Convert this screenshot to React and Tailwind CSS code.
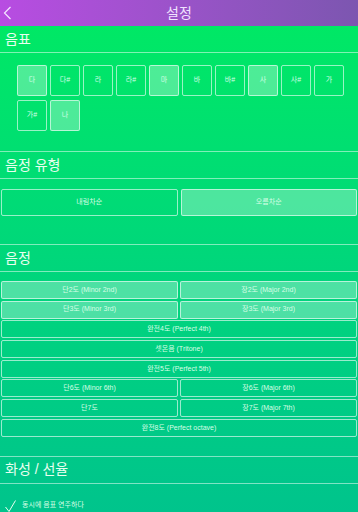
import React from "react";

const notes = [
  { name: "다", on: true },
  { name: "다#", on: false },
  { name: "라", on: false },
  { name: "라#", on: false },
  { name: "마", on: true },
  { name: "바", on: false },
  { name: "바#", on: false },
  { name: "사", on: true },
  { name: "사#", on: false },
  { name: "가", on: false },
  { name: "가#", on: false },
  { name: "나", on: true },
];

const intervals = [
  [
    { name: "단2도 (Minor 2nd)", on: true },
    { name: "장2도 (Major 2nd)", on: true },
  ],
  [
    { name: "단3도 (Minor 3rd)", on: true },
    { name: "장3도 (Major 3rd)", on: true },
  ],
  [{ name: "완전4도 (Perfect 4th)", on: false }],
  [{ name: "셋온음 (Tritone)", on: false }],
  [{ name: "완전5도 (Perfect 5th)", on: false }],
  [
    { name: "단6도 (Minor 6th)", on: false },
    { name: "장6도 (Major 6th)", on: false },
  ],
  [
    { name: "단7도", on: false },
    { name: "장7도 (Major 7th)", on: false },
  ],
  [{ name: "완전8도 (Perfect octave)", on: false }],
];

const font = {
  fontFamily: '"Liberation Sans", "Noto Sans CJK KR", sans-serif',
};

const SectionTitle = ({ children }) => (
  <div className="h-[27px] shrink-0 flex items-center px-[5px] border-b border-white/50 text-[14px] text-[#e9fff0]">
    {children}
  </div>
);

const App = () => {
  return (
    <div
      className="w-[358px] h-[512px] overflow-hidden flex flex-col bg-gradient-to-b from-[#00ea62] to-[#00c48c]"
      style={font}
    >
      {/* Header */}
      <div className="h-[26px] shrink-0 relative flex items-center justify-center bg-gradient-to-r from-[#b84ce2] to-[#7c56b0]">
        <svg
          className="absolute left-[3px] top-[6px]"
          width="9"
          height="14"
          viewBox="0 0 9 14"
          fill="none"
          stroke="#f3e6ff"
          strokeWidth="1.2"
        >
          <path d="M7.5 1 L1.5 7 L7.5 13" />
        </svg>
        <span className="text-[14px] text-[#f0e2ff]">설정</span>
      </div>

      {/* 음표 */}
      <SectionTitle>음표</SectionTitle>
      <div className="shrink-0 pt-[12px] pb-[20px] pl-[17px] border-b border-white/50">
        <div className="flex flex-wrap gap-x-[3px] gap-y-[4px] w-[330px]">
          {notes.map((n, i) => (
            <div
              key={i}
              className={`w-[30px] h-[31px] rounded-[2px] border border-white/60 flex items-center justify-center text-[7px] text-[#d8ffe6] ${
                n.on ? "bg-white/30" : ""
              }`}
            >
              {n.name}
            </div>
          ))}
        </div>
      </div>

      {/* 음정 유형 */}
      <SectionTitle>음정 유형</SectionTitle>
      <div className="shrink-0 pt-[10px] pb-[28px] px-[1px] flex gap-[3px] border-b border-white/50">
        <div className="flex-1 h-[27px] rounded-[2px] border border-white/60 flex items-center justify-center text-[7px] text-[#d8ffe6]">
          내림차순
        </div>
        <div className="flex-1 h-[27px] rounded-[2px] border border-white/60 bg-white/30 flex items-center justify-center text-[7px] text-[#d8ffe6]">
          오름차순
        </div>
      </div>

      {/* 음정 */}
      <SectionTitle>음정</SectionTitle>
      <div className="shrink-0 pt-[9px] pb-[19px] px-[1px] flex flex-col gap-[1.7px] border-b border-white/50">
        {intervals.map((row, r) => (
          <div key={r} className="flex gap-[2px]">
            {row.map((it, i) => (
              <div
                key={i}
                className={`flex-1 h-[18px] rounded-[2px] border border-white/60 flex items-center justify-center text-[7px] text-[#d8ffe6] ${
                  it.on ? "bg-white/30" : ""
                }`}
              >
                {it.name}
              </div>
            ))}
          </div>
        ))}
      </div>

      {/* 화성 / 선율 */}
      <SectionTitle>화성 / 선율</SectionTitle>
      <div className="shrink-0 flex items-end gap-[6px] pl-[5px] pt-[16px]">
        <svg width="11" height="12" viewBox="0 0 11 12" fill="none" stroke="#e9fff0" strokeWidth="1">
          <path d="M0.5 7 L4 11.5 L10.5 0.5" />
        </svg>
        <span className="text-[7px] text-[#d8ffe6] mb-[2px]">동시에 음표 연주하다</span>
      </div>
    </div>
  );
};

export default App;
